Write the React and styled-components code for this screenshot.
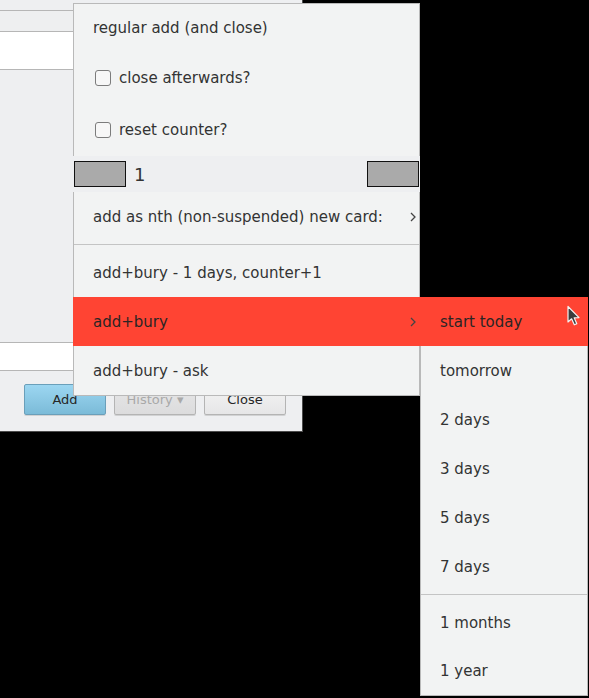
import styled, { createGlobalStyle } from "styled-components";

const Global = createGlobalStyle`
  html, body {
    margin: 0;
    padding: 0;
    background: #000;
  }
  body {
    font-family: "DejaVu Sans", "Noto Sans", sans-serif;
    color: #333;
  }
`;

const Desktop = styled.div`
  position: relative;
  width: 589px;
  height: 698px;
  background: #000;
  overflow: hidden;
`;

/* ---------- window behind the menu ---------- */

const Window = styled.div`
  position: absolute;
  left: 0;
  top: 0;
  width: 303px;
  height: 432px;
  box-sizing: border-box;
  background: #eeeff1;
  border-right: 1px solid #4c4c4c;
  border-bottom: 1px solid #4c4c4c;
  display: flex;
  flex-direction: column;
`;

const TagBar = styled.div`
  margin-top: 10px;
  height: 22px;
  box-sizing: border-box;
  background: #eeeff0;
  border-top: 1px solid #b6b6b6;
  border-bottom: 1px solid #b6b6b6;
`;

const Field = styled.div`
  height: ${(p) => p.$h}px;
  box-sizing: border-box;
  background: #fff;
  border-bottom: 1px solid #b6b6b6;
  ${(p) => p.$top && "border-top: 1px solid #b6b6b6;"}
`;

const Editor = styled.div`
  flex: 1;
`;

const ButtonRow = styled.div`
  display: flex;
  gap: 8px;
  padding: 13px 0 16px 24px;
`;

const Button = styled.div`
  width: 82px;
  height: 31px;
  box-sizing: border-box;
  display: flex;
  align-items: center;
  justify-content: center;
  font-size: 13px;
  border-radius: 2px;
  border: 1px solid ${(p) => (p.$primary ? "#6a9fba" : "#b4b4b4")};
  color: ${(p) => (p.$disabled ? "#a9a9a9" : "#262626")};
  background: ${(p) =>
    p.$primary
      ? "linear-gradient(#9cd6f1, #7bbbd8)"
      : p.$disabled
      ? "linear-gradient(#e6e6e7, #dcdcdd)"
      : "linear-gradient(#f4f4f4, #e6e6e7)"};
  box-shadow: 0 1px 0 rgba(0, 0, 0, 0.12);
`;

/* ---------- popup menus ---------- */

const Menu = styled.div`
  position: absolute;
  left: ${(p) => p.$x}px;
  top: ${(p) => p.$y}px;
  width: ${(p) => p.$w}px;
  box-sizing: border-box;
  background: #f2f3f3;
  border: 1px solid #b9b9b9;
  ${(p) => p.$noTop && "border-top: none;"}
  display: flex;
  flex-direction: column;
  font-size: 15px;
`;

const Item = styled.div`
  height: ${(p) => p.$h || 49}px;
  display: flex;
  align-items: center;
  justify-content: space-between;
  padding: 0 ${(p) => (p.$active ? 4 : 3)}px 0 ${(p) => (p.$active ? 20 : 19)}px;
  margin: 0 ${(p) => (p.$active ? -1 : 0)}px;
  background: ${(p) => (p.$active ? "#ff4433" : "transparent")};
  color: ${(p) => (p.$active ? "#2b2424" : "#333")};
  white-space: nowrap;
`;

const CheckItem = styled.label`
  height: 52px;
  display: flex;
  align-items: center;
  gap: 8px;
  padding-left: 21px;
  white-space: nowrap;
`;

const Box = styled.span`
  width: 16px;
  height: 16px;
  box-sizing: border-box;
  border: 1px solid #7c7c7c;
  border-radius: 3px;
  background: #f7f7f7;
`;

const SliderRow = styled.div`
  height: 36px;
  margin: 0 -1px;
  padding: 0 1px;
  display: flex;
  align-items: center;
  background: #eeeff1;
  font-size: 18px;
`;

const Handle = styled.div`
  width: 52px;
  height: 26px;
  box-sizing: border-box;
  background: #aaaaaa;
  border: 1px solid #111;
`;

const Count = styled.span`
  flex: 1;
  padding-left: 8px;
  color: #333;
`;

const Separator = styled.div`
  height: 7px;
  display: flex;
  align-items: center;
  &::after {
    content: "";
    flex: 1;
    height: 1px;
    margin-bottom: 1px;
    background: #c4c4c4;
  }
`;

const Cursor = styled.svg`
  position: absolute;
  left: 566px;
  top: 305px;
`;

function Chevron() {
  return (
    <svg width="6" height="10" viewBox="0 0 6 10">
      <path d="M1 1 L5 5 L1 9" fill="none" stroke="#444" strokeWidth="1.3" />
    </svg>
  );
}

const later = ["tomorrow", "2 days", "3 days", "5 days", "7 days"];

export default function App() {
  return (
    <Desktop>
      <Global />
      <Window>
        <TagBar />
        <Field $h={38} />
        <Editor />
        <Field $h={29} $top />
        <ButtonRow>
          <Button $primary>Add</Button>
          <Button $disabled>History ▾</Button>
          <Button>Close</Button>
        </ButtonRow>
      </Window>

      <Menu $x={73} $y={3} $w={347}>
        <Item $h={48}>regular add (and close)</Item>
        <CheckItem>
          <Box />
          close afterwards?
        </CheckItem>
        <CheckItem>
          <Box />
          reset counter?
        </CheckItem>
        <SliderRow>
          <Handle />
          <Count>1</Count>
          <Handle />
        </SliderRow>
        <Item>
          add as nth (non-suspended) new card:
          <Chevron />
        </Item>
        <Separator />
        <Item>add+bury - 1 days, counter+1</Item>
        <Item $active>
          add+bury
          <Chevron />
        </Item>
        <Item>add+bury - ask</Item>
      </Menu>

      <Menu $x={420} $y={297} $w={168} $noTop>
        <Item $active>start today</Item>
        {later.map((t) => (
          <Item key={t}>{t}</Item>
        ))}
        <Separator />
        <Item>1 months</Item>
        <Item $h={48}>1 year</Item>
      </Menu>

      <Cursor width="16" height="22" viewBox="0 0 16 22">
        <path
          d="M2 1.5 L2 17 L5.6 13.8 L8.3 19.8 L10.8 18.7 L8.2 12.8 L13 12.6 Z"
          fill="#3c3c3c"
          stroke="#f2f2f2"
          strokeWidth="1.2"
          strokeLinejoin="round"
        />
      </Cursor>
    </Desktop>
  );
}
